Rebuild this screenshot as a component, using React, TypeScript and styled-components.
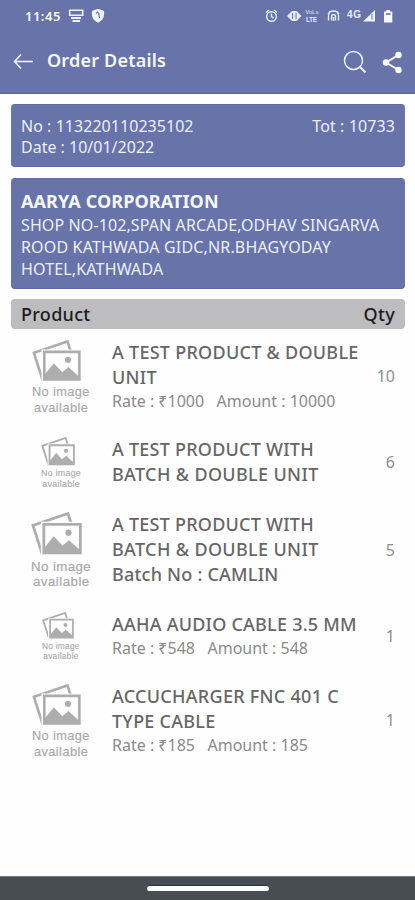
import React from "react";
import styled, { createGlobalStyle } from "styled-components";

const Global = createGlobalStyle`
  * { box-sizing: border-box; }
  body { margin: 0; background: #fefefe; font-family: "Noto Sans", "Open Sans", sans-serif; }
`;

const Screen = styled.div`
  width: 415px;
  height: 900px;
  display: flex;
  flex-direction: column;
  overflow: hidden;
`;

const Header = styled.header`
  height: 93.5px;
  flex: none;
  background: #6873aa;
  border-bottom: 1.5px solid #5a639c;
  color: #f4f8ff;
`;

const StatusBar = styled.div`
  height: 32px;
  padding: 0 21px 0 25px;
  display: flex;
  align-items: center;
`;

const Clock = styled.span`
  width: 43px;
  font-size: 13px;
  font-weight: 600;
  line-height: 16px;
  letter-spacing: 0.5px;
  white-space: nowrap;
`;

const StatusIcons = styled.svg`
  display: block;
  flex: none;
`;

const Spacer = styled.div`
  flex: 1;
`;

const Toolbar = styled.div`
  height: 60px;
  padding: 0 12px 0 13px;
  display: flex;
  align-items: center;
`;

const Title = styled.h1`
  flex: 1;
  margin: 0 0 4px 13px;
  font-size: 18px;
  line-height: 25px;
  font-weight: 600;
  letter-spacing: 0.2px;
`;

const IconButton = styled.button<{ $gap?: number; $lift?: number }>`
  display: flex;
  padding: 0;
  margin: 0 0 ${(p) => p.$lift ?? 0}px ${(p) => p.$gap ?? 0}px;
  border: 0;
  background: none;
  color: inherit;
`;

const Content = styled.main`
  flex: 1;
  padding: 10.5px 10px 0 11px;
`;

const Card = styled.section<{ $height: number; $gap: number; $top: number; $line: number }>`
  height: ${(p) => p.$height}px;
  margin-bottom: ${(p) => p.$gap}px;
  padding: ${(p) => p.$top}px 10px 0;
  border-radius: 4px;
  background: #6873aa;
  border: 1px solid #606ba4;
  border-width: 1px 0;
  color: #eaf0fb;
  font-size: 16px;
  line-height: ${(p) => p.$line}px;
`;

const Between = styled.div`
  display: flex;
  justify-content: space-between;
`;

const Text = styled.span<{ $spacing?: number }>`
  display: block;
  white-space: nowrap;
  letter-spacing: ${(p) => p.$spacing ?? 0}px;
`;

const Company = styled.h2`
  margin: 0;
  font-size: 18px;
  line-height: 25px;
  font-weight: 700;
  letter-spacing: 0.1px;
  color: #f4f8ff;
  white-space: nowrap;
`;

const TableHead = styled.div`
  height: 30px;
  margin-bottom: 11px;
  padding: 0 10px;
  display: flex;
  align-items: center;
  justify-content: space-between;
  border-radius: 4px;
  background: #bdbdbf;
  color: #1c1c1e;
  font-size: 18px;
  font-weight: 500;
`;

const List = styled.div`
  display: flex;
  flex-direction: column;
  gap: 25px;
`;

const Row = styled.article`
  padding-right: 10px;
  display: flex;
  align-items: center;
`;

const Thumb = styled.div`
  width: 101px;
  padding-right: 2px;
  display: flex;
  justify-content: center;
  align-self: flex-start;
`;

const Info = styled.div`
  flex: 1;
  color: #666;
  font-size: 18px;
  line-height: 25px;
  font-weight: 500;
`;

const Price = styled.div`
  display: flex;
  gap: 12.5px;
  height: 22px;
  font-size: 16px;
  line-height: 22px;
  font-weight: 400;
  color: #8a8a8a;
`;

const Qty = styled.div`
  color: #8f8f8f;
  font-size: 16px;
  line-height: 22px;
`;

const NavBar = styled.footer`
  height: 24px;
  flex: none;
  padding-top: 9px;
  display: flex;
  justify-content: center;
  background: #464e54;
  border-top: 1px solid #777b7f;
`;

const Handle = styled.div`
  width: 122px;
  height: 5px;
  border-radius: 3px;
  background: #fff;
  box-shadow: 0 -1px 1px #243b48;
`;

const NoImage = ({ height }: { height: number }) => (
  <svg width={(height * 60) / 76} height={height} viewBox="0 0 60 76" overflow="visible">
    <path d="M11 41.500 2 13.500 37.500 1.500l5 16z" fill="none" stroke="#adadad" strokeWidth="2.800" />
    <path d="M10 10h42v33.500H10z" fill="#fefefe" />
    <path d="M13 12.500h37v29H13z" fill="none" stroke="#adadad" strokeWidth="2.800" />
    <circle cx="38" cy="21" r="3.200" fill="#adadad" />
    <path d="M13 42v-5l10-12.500L32 34l6.500-5.500L50 39v3z" fill="#adadad" />
    <g fill="#a9a9a9" stroke="#a9a9a9" strokeWidth=".2" fontFamily="Liberation Sans, sans-serif" fontSize="13.500">
      <text x="0" y="59.500" textLength="60.500">No image</text>
      <text x="2" y="75.500" textLength="57">available</text>
    </g>
  </svg>
);

type Item = {
  thumb: number;
  lines: [string, number][];
  price?: [string, string];
  qty: string;
};

const items: Item[] = [
  { thumb: 72, lines: [["A TEST PRODUCT & DOUBLE", 0.27], ["UNIT", 0.3]], price: ["₹1000", "10000"], qty: "10" },
  { thumb: 50, lines: [["A TEST PRODUCT WITH", 0.24], ["BATCH & DOUBLE UNIT", 0.35]], qty: "6" },
  { thumb: 75, lines: [["A TEST PRODUCT WITH", 0.24], ["BATCH & DOUBLE UNIT", 0.35], ["Batch No : CAMLIN", 0.22]], qty: "5" },
  { thumb: 47, lines: [["AAHA AUDIO CABLE 3.5 MM", 0.23]], price: ["₹548", "548"], qty: "1" },
  { thumb: 72, lines: [["ACCUCHARGER FNC 401 C", 0.28], ["TYPE CABLE", 0.25]], price: ["₹185", "185"], qty: "1" },
];

export default function App() {
  return (
    <Screen>
      <Global />
      <Header>
        <StatusBar>
          <Clock>11:45</Clock>
          <StatusIcons width="40" height="18" viewBox="0 0 40 18" fill="none" stroke="#eaf1fb">
            <path d="M1.700 3.200h13v5h-13z" strokeWidth="1.600" />
            <path d="M3 11h10M4.500 14h7.500" strokeWidth="2" />
            <path d="M24 4q3-1.500 6-2 3 .5 6 2 .7 5-1.700 8.500Q32.500 14.500 30 15.800q-2.500-1.300-4.300-3.300Q23.300 9 24 4z" fill="#eef4fc" stroke="none" />
            <path d="M28 6.500l1.500-1.500L31 6.500v3l1 1.500" stroke="#6873aa" strokeWidth="1.100" />
          </StatusIcons>
          <Spacer />
          <StatusIcons width="130" height="20" viewBox="264 6 130 20" fill="none" stroke="#e4ebf8" strokeWidth="1.400">
            <circle cx="271.500" cy="16.500" r="4.800" />
            <path d="M271.500 13.500v3.200l2.200 1.500M266 12.500l3-2.500M277 12.500l-3-2.500" />
            <path d="M287 16l5-5h4.500l5 5-5 5H292z" fill="#e4ebf8" stroke="none" />
            <path d="M292.500 13v6M296 13v6" stroke="#6873aa" strokeWidth="1" />
            <path d="M328.500 20.500V16q0-5 5-5t5 5v4.500M331.500 20.500V17q0-2.500 2-2.500t2 2.500v3.500M328 14.500l2-3M339 14.500l-2-3M333.500 17v4" />
            <path d="M363 21.500 375 10v11.500z" fill="#eef4fc" stroke="none" />
            <path d="M372 14v5.500" stroke="#6873aa" strokeWidth="1" />
            <path d="M384 11.500h2.300V10h3.700v1.500h2.300v11H384z" fill="#f6faff" stroke="none" />
            <path d="M386 14h4.500" stroke="#6873aa" strokeWidth="1.600" />
            <g fill="#e4ebf8" stroke="none" fontFamily="Liberation Sans, sans-serif" fontWeight="700">
              <text x="305.500" y="13.800" fontSize="5.500" textLength="13" opacity=".75">VoLs</text>
              <text x="306" y="21.500" fontSize="6.500" textLength="11">LTE</text>
              <text x="347" y="17.500" fontSize="10" textLength="14">4G</text>
            </g>
          </StatusIcons>
        </StatusBar>
        <Toolbar>
          <IconButton aria-label="Back" $lift={3}>
            <svg width="21" height="18" viewBox="0 0 21 18" fill="none" stroke="currentColor" strokeWidth="1.500">
              <path d="M20 9.500H1.500M8 2.500 1.500 9.500 8 16.500" />
            </svg>
          </IconButton>
          <Title>Order Details</Title>
          <IconButton aria-label="Search">
            <svg width="24" height="24" viewBox="0 0 24 24" fill="none" stroke="#e9effa" strokeWidth="1.500">
              <circle cx="10.500" cy="10.500" r="9" />
              <path d="m17 17 5.500 5.500" strokeWidth="1.900" />
            </svg>
          </IconButton>
          <IconButton aria-label="Share" $gap={15}>
            <svg width="21" height="23" viewBox="0 0 21 23" fill="#fff" stroke="#fff" strokeWidth="2">
              <path d="M16.500 4 4 11.500 16.500 19" fill="none" />
              <circle cx="16.500" cy="4" r="2.200" />
              <circle cx="4" cy="11.500" r="2.200" />
              <circle cx="16.500" cy="19" r="2.200" />
            </svg>
          </IconButton>
        </Toolbar>
      </Header>
      <Content>
        <Card $height={63} $gap={11} $top={11} $line={21.4}>
          <Between>
            <Text $spacing={0.04}>No : 113220110235102</Text>
            <Text $spacing={0.1}>Tot : 10733</Text>
          </Between>
          <Text>Date : 10/01/2022</Text>
        </Card>
        <Card $height={111} $gap={10} $top={10} $line={22}>
          <Company>AARYA CORPORATION</Company>
          <Text $spacing={0.11}>SHOP NO-102,SPAN ARCADE,ODHAV SINGARVA</Text>
          <Text $spacing={0.16}>ROOD KATHWADA GIDC,NR.BHAGYODAY</Text>
          <Text $spacing={0.16}>HOTEL,KATHWADA</Text>
        </Card>
        <TableHead>
          <Text $spacing={0.3}>Product</Text>
          <Text $spacing={0.3}>Qty</Text>
        </TableHead>
        <List>
          {items.map((item, i) => (
            <Row key={i}>
              <Thumb>
                <NoImage height={item.thumb} />
              </Thumb>
              <Info>
                {item.lines.map(([line, spacing]) => (
                  <Text key={line} $spacing={spacing}>{line}</Text>
                ))}
                {item.price && (
                  <Price>
                    <Text>Rate : {item.price[0]}</Text>
                    <Text>Amount : {item.price[1]}</Text>
                  </Price>
                )}
              </Info>
              <Qty>{item.qty}</Qty>
            </Row>
          ))}
        </List>
      </Content>
      <NavBar>
        <Handle />
      </NavBar>
    </Screen>
  );
}
